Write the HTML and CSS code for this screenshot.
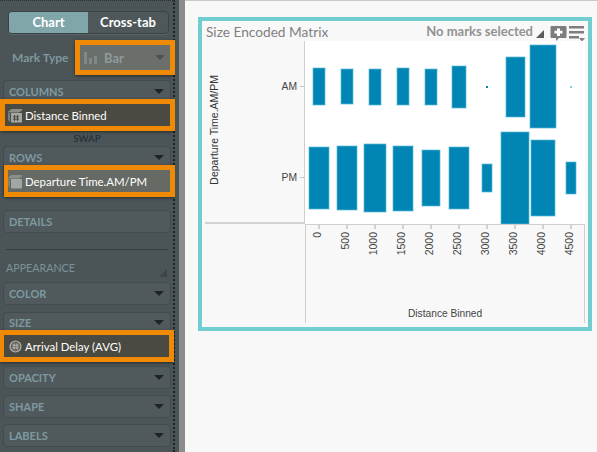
FILE: index.html
```html
<!DOCTYPE html>
<html lang="en">
<head>
<meta charset="utf-8">
<title>Size Encoded Matrix</title>
<link rel="stylesheet" href="styles.css">
</head>
<body>
<div class="page">
  <aside class="sidebar">
    <div class="toggle">
      <div class="toggle-item is-active">Chart</div>
      <div class="toggle-item">Cross-tab</div>
    </div>
    <div class="mark-row">
      <span class="mark-label">Mark Type</span>
      <div class="mark-select">
        <svg class="bar-icon" width="14" height="12" viewBox="0 0 14 12"><path d="M1 0h3v12H1zM6 6h3v6H6zM11 4h3v8h-3z"/></svg>
        <span class="mark-value">Bar</span>
        <span class="caret caret-dim"></span>
      </div>
    </div>

    <section class="panel panel-open first-open">
      <header class="panel-head"><span>COLUMNS</span><span class="caret"></span></header>
      <div class="pill pill-dark">
        <svg class="cube" width="15" height="15" viewBox="0 0 15 15"><path class="cube-top" d="M0 3.500 3.500 1H14v1.500L11 4.500H2z"/><path class="cube-side" d="M0 4l2 1.500v8.500L0 12z"/><path class="cube-front" d="M3 5h11v9.500H3z"/><path class="cube-hash" d="M6.500 7v6M9.500 7v6M5 8.800h6M5 11.200h6"/></svg>
        <span>Distance Binned</span>
      </div>
    </section>
    <div class="swap">SWAP</div>
    <section class="panel panel-open">
      <header class="panel-head"><span>ROWS</span><span class="caret"></span></header>
      <div class="pill pill-light pill-shift">
        <svg class="cube" width="15" height="15" viewBox="0 0 15 15"><path class="cube-top" d="M0 3.500 3.500 1H14v1.500L11 4.500H2z"/><path class="cube-side" d="M0 4l2 1.500v8.500L0 12z"/><path class="cube-front" d="M3 5h11v9.500H3z"/></svg>
        <span>Departure Time.AM/PM</span>
      </div>
    </section>

    <section class="panel details"><header class="panel-head closed"><span>DETAILS</span></header></section>
    <div class="divider"></div>
    <div class="appearance">
      <span>APPEARANCE</span>
      <svg width="8" height="8" viewBox="0 0 8 8"><path class="resize" d="M8 0v8H0z"/></svg>
    </div>

    <section class="panel color"><header class="panel-head closed"><span>COLOR</span><span class="caret"></span></header></section>
    <section class="panel panel-open size">
      <header class="panel-head size-head"><span>SIZE</span><span class="caret"></span></header>
      <div class="pill pill-dark pill-size">
        <svg width="13" height="13" viewBox="0 0 13 13"><circle class="ring" cx="6.500" cy="6.500" r="5.500"/><path class="ring-hash" d="M5 3.500v6M8 3.500v6M3.500 5.200h6M3.500 7.800h6"/></svg>
        <span>Arrival Delay (AVG)</span>
      </div>
    </section>
    <section class="panel opacity"><header class="panel-head closed"><span>OPACITY</span><span class="caret"></span></header></section>
    <section class="panel after"><header class="panel-head closed"><span>SHAPE</span><span class="caret"></span></header></section>
    <section class="panel after"><header class="panel-head closed"><span>LABELS</span><span class="caret"></span></header></section>
  </aside>
  <div class="strip"></div>

  <main class="main">
    <div class="frame">
      <header class="title-row">
        <span class="title">Size Encoded Matrix</span>
        <span class="selection">No marks selected</span>
        <svg class="corner" width="8" height="8" viewBox="0 0 9 9"><path d="M9 0v9H0z"/></svg>
        <svg class="tool" width="17" height="17" viewBox="0 0 17 17"><path class="tool-fill" d="M1.500 1h14a1 1 0 0 1 1 1v10a1 1 0 0 1-1 1H9l-3 3v-3H1.500a1 1 0 0 1-1-1V2a1 1 0 0 1 1-1z"/><path class="tool-plus" d="M7 3.500h3v2.300h2.500v2.800H10V11H7V8.600H4.500V5.800H7z"/></svg>
        <svg class="tool" width="16" height="17" viewBox="0 0 16 17"><path class="tool-fill" d="M0 1h15v2.500H0zM0 6h15v2.500H0zM0 11h10v2.500H0zM10 13h6l-3 3.500z"/></svg>
      </header>
      <div class="chart">
        <div class="y-area">
          <div class="y-title"><span>Departure Time.AM/PM</span></div>
          <div class="y-ticks">
            <div class="y-tick am">AM<i></i></div>
            <div class="y-tick pm">PM<i></i></div>
          </div>
        </div>
        <svg class="plot" width="280" height="183" viewBox="305 41 280 183">
          <g class="marks">
            <rect x="313" y="68" width="12" height="37"/>
            <rect x="341" y="69" width="12" height="35"/>
            <rect x="369" y="69" width="12" height="36"/>
            <rect x="397" y="68" width="12" height="37"/>
            <rect x="425" y="69" width="12" height="36"/>
            <rect x="452" y="66" width="14" height="42"/>
            <rect class="dot" x="486" y="86" width="2" height="2"/>
            <rect x="506" y="57" width="19" height="60"/>
            <rect x="530" y="45" width="26" height="83"/>
            <rect class="faint" x="570" y="86" width="2" height="2"/>
            <rect x="309" y="147" width="20" height="62"/>
            <rect x="337" y="146" width="20" height="64"/>
            <rect x="364" y="144" width="22" height="68"/>
            <rect x="393" y="146" width="20" height="65"/>
            <rect x="422" y="150" width="18" height="56"/>
            <rect x="449" y="147" width="20" height="62"/>
            <rect x="482" y="164" width="10" height="28"/>
            <rect x="501" y="132" width="28" height="92"/>
            <rect x="531" y="140" width="24" height="76"/>
            <rect x="566" y="162" width="10" height="32"/>
          </g>
        </svg>
        <div class="corner-blank"></div>
        <div class="x-area">
          <div class="x-ticks">
            <div class="x-tick"><i></i><span>0</span></div>
            <div class="x-tick"><i></i><span>500</span></div>
            <div class="x-tick"><i></i><span>1000</span></div>
            <div class="x-tick"><i></i><span>1500</span></div>
            <div class="x-tick"><i></i><span>2000</span></div>
            <div class="x-tick"><i></i><span>2500</span></div>
            <div class="x-tick"><i></i><span>3000</span></div>
            <div class="x-tick"><i></i><span>3500</span></div>
            <div class="x-tick"><i></i><span>4000</span></div>
            <div class="x-tick"><i></i><span>4500</span></div>
          </div>
          <div class="x-title">Distance Binned</div>
        </div>
      </div>
    </div>
  </main>
</div>
</body>
</html>
```

FILE: styles.css
```css
* { box-sizing: border-box; }
html, body { margin: 0; padding: 0; }
body { width: 597px; height: 452px; overflow: hidden; background: #f8f8f8; }
.page { display: flex; width: 597px; height: 452px; overflow: hidden; }

.sidebar {
  width: 175px; height: 452px; flex: none; padding: 10px 2px 0 3px;
  background: #4b5558;
  border-top: 1px dotted #2a3033;
  border-right: 2px dotted #1d2224;
  font-family: "Lato", "Open Sans", sans-serif;
}
.strip { width: 10px; flex: none; background: linear-gradient(to right, #4a5457 0 4px, #8c8c8c 4px 10px); }

.toggle {
  display: flex; height: 23px; margin: 0 2px 0 5px; width: 161px;
  border: 1px solid #3a4346; border-radius: 4px; overflow: hidden;
  background: #4e585b; box-shadow: 0 1px 0 #596366;
}
.toggle-item { flex: 1; color: #fff; font-size: 13px; font-weight: 700; line-height: 21px; text-align: center; }
.toggle-item.is-active { background: #80a6a9; flex: none; width: 79px; }

.mark-row { display: flex; align-items: center; height: 35px; margin-top: 6px; padding-left: 9px; }
.mark-label { width: 63px; flex: none; color: #7e979d; font-size: 12px; font-weight: 700; white-space: nowrap; }
.mark-select {
  width: 100px; height: 35px; flex: none; display: flex; align-items: center;
  padding: 0 5px 0 3px; background: #6b6f6b;
  border: 5px solid #f08a05; box-shadow: 0 1px 3px rgba(0,0,0,.5);
}
.bar-icon path { fill: #80898a; }
.mark-value { flex: 1; margin-left: 7px; color: #8e9c9c; font-size: 13px; font-weight: 700; }

.caret { width: 0; height: 0; border: 5px solid transparent; border-top: 5px solid #1e2325; border-bottom: 0; }
.caret-dim { border-top-color: #4d5152; }

.panel { margin-top: 5px; border-radius: 4px; border: 1px solid #424b4e; background: #50595c; }
.panel-open { border-bottom: 0; margin-top: 0; }
.first-open { margin-top: 5px; }
.panel-head {
  display: flex; align-items: center; justify-content: space-between;
  height: 18px; padding: 2px 6px 0 5px;
  color: #7e9aa0; font-size: 11px; font-weight: 700;
}
.panel-head.closed { height: 21px; padding-top: 0; }
.size-head { height: 17px; }

.pill {
  display: flex; align-items: center; gap: 2px; height: 32px;
  margin: 0 -5px 0 -4px; padding-left: 3px;
  border: 5px solid #f08a05;
  color: #fff; font-size: 11.400px; white-space: nowrap;
  box-shadow: 0 1px 3px rgba(0,0,0,.5);
}
.pill-dark { background: #4a4a42; }
.pill-light { background: #666a64; }
.pill-shift { margin-left: 0; padding-left: 0; border-left-width: 4px; gap: 2px; }
.pill-size { margin-right: -4px; gap: 3px; padding-left: 5px; border-left-width: 4px; }

.cube-top { fill: #8b8f8c; }
.cube-side { fill: #7a7e7c; }
.cube-front { fill: #a3a7a4; }
.cube-hash { stroke: #4a4a42; stroke-width: 1; fill: none; }
.ring { fill: #6a6a62; stroke: #b0b3b0; stroke-width: 1.200; }
.ring-hash { stroke: #c0c2c0; stroke-width: .8; fill: none; }

.swap { height: 15px; text-align: center; color: #25343c; font-size: 9.500px; font-weight: 700; line-height: 14px; padding-top: 1px; }

.details { margin-top: 13px; }
.divider { height: 1px; margin: 16px 3px 0 3px; background: #353c3f; }
.appearance {
  display: flex; justify-content: space-between; align-items: flex-end;
  height: 32px; padding: 0 4px 5px 3px; color: #7c9499; font-size: 10.700px;
}
.appearance span { line-height: 14px; margin-bottom: 2px; }
.resize { fill: #3d4548; }
.color { margin-top: 0; }
.size { margin-top: 7px; }
.opacity { margin-top: 4px; }
.after { margin-top: 6px; }

.main { flex: 1; min-width: 0; padding: 17px 0 0 13px; border-top: 1px solid #c9c9c9; }
.frame {
  width: 394px; height: 314px; margin-top: -1px; display: flex; flex-direction: column;
  border: 4px solid #72cdd0; background: #f8f8f8;
}
.title-row {
  display: flex; align-items: center; height: 20px; flex: none;
  padding: 0 3px 0 4px; font-family: "Lato", "Open Sans", sans-serif;
  color: #7c7c7c;
}
.title { font-size: 13.700px; flex: 1; color: #808080; }
.selection { font-size: 13px; font-weight: 700; color: #929292; }
.corner { margin: 5px 4px 0 3px; }
.corner path { fill: #5b5b5b; }
.tool { flex: none; margin-left: 2px; margin-top: 5px; }
.tool-fill { fill: #7d7d7d; }
.tool-plus { fill: #fff; }

.chart { display: grid; grid-template-columns: 103px 280px; grid-template-rows: 183px 99px; font-family: "Liberation Sans", Arial, sans-serif; color: #333; font-size: 10.500px; }
.y-area { display: flex; position: relative; padding-left: 3px; border-right: 1px solid #cfcfcf; }
.y-area::after { content: ""; position: absolute; left: 3px; right: 0; bottom: 0; height: 2px; background: #d3d3d3; }
.y-title { width: 17px; display: flex; align-items: center; justify-content: center; padding-bottom: 6px; }
.y-title span { writing-mode: vertical-rl; transform: rotate(180deg); white-space: nowrap; font-size: 10.500px; }
.y-ticks { flex: 1; display: flex; flex-direction: column; padding-top: 38px; }
.y-tick { display: flex; align-items: center; justify-content: flex-end; gap: 3px; height: 14px; font-size: 10.300px; color: #444; }
.y-tick i { display: block; width: 4px; height: 1px; background: #c4c4c4; }
.y-tick.pm { margin-top: 77px; }
.plot { display: block; background: #fff; }
.marks rect { fill: #0085b5; stroke: #5cbad6; stroke-width: 1; stroke-opacity: .7; }
.marks .dot { stroke: none; }
.marks .faint { fill: #7fd0e6; stroke: none; }
.x-area { border-top: 1px solid #cfcfcf; border-left: 1px solid #cfcfcf; border-right: 1px solid #cfcfcf; width: 280px; height: 99px; display: flex; flex-direction: column; }
.x-ticks { display: flex; height: 78px; margin-left: -1px; }
.x-tick { width: 28px; flex: none; display: flex; flex-direction: column; align-items: center; gap: 3px; color: #444; }
.x-tick i { display: block; width: 2px; height: 4px; background: #d0d0d0; }
.x-tick span { writing-mode: vertical-rl; transform: rotate(180deg); font-size: 10.500px; line-height: 12px; margin-right: 4px; }
.x-title { padding-left: 102px; font-size: 10.200px; color: #444; line-height: 12px; margin-top: 5px; white-space: nowrap; }
```
